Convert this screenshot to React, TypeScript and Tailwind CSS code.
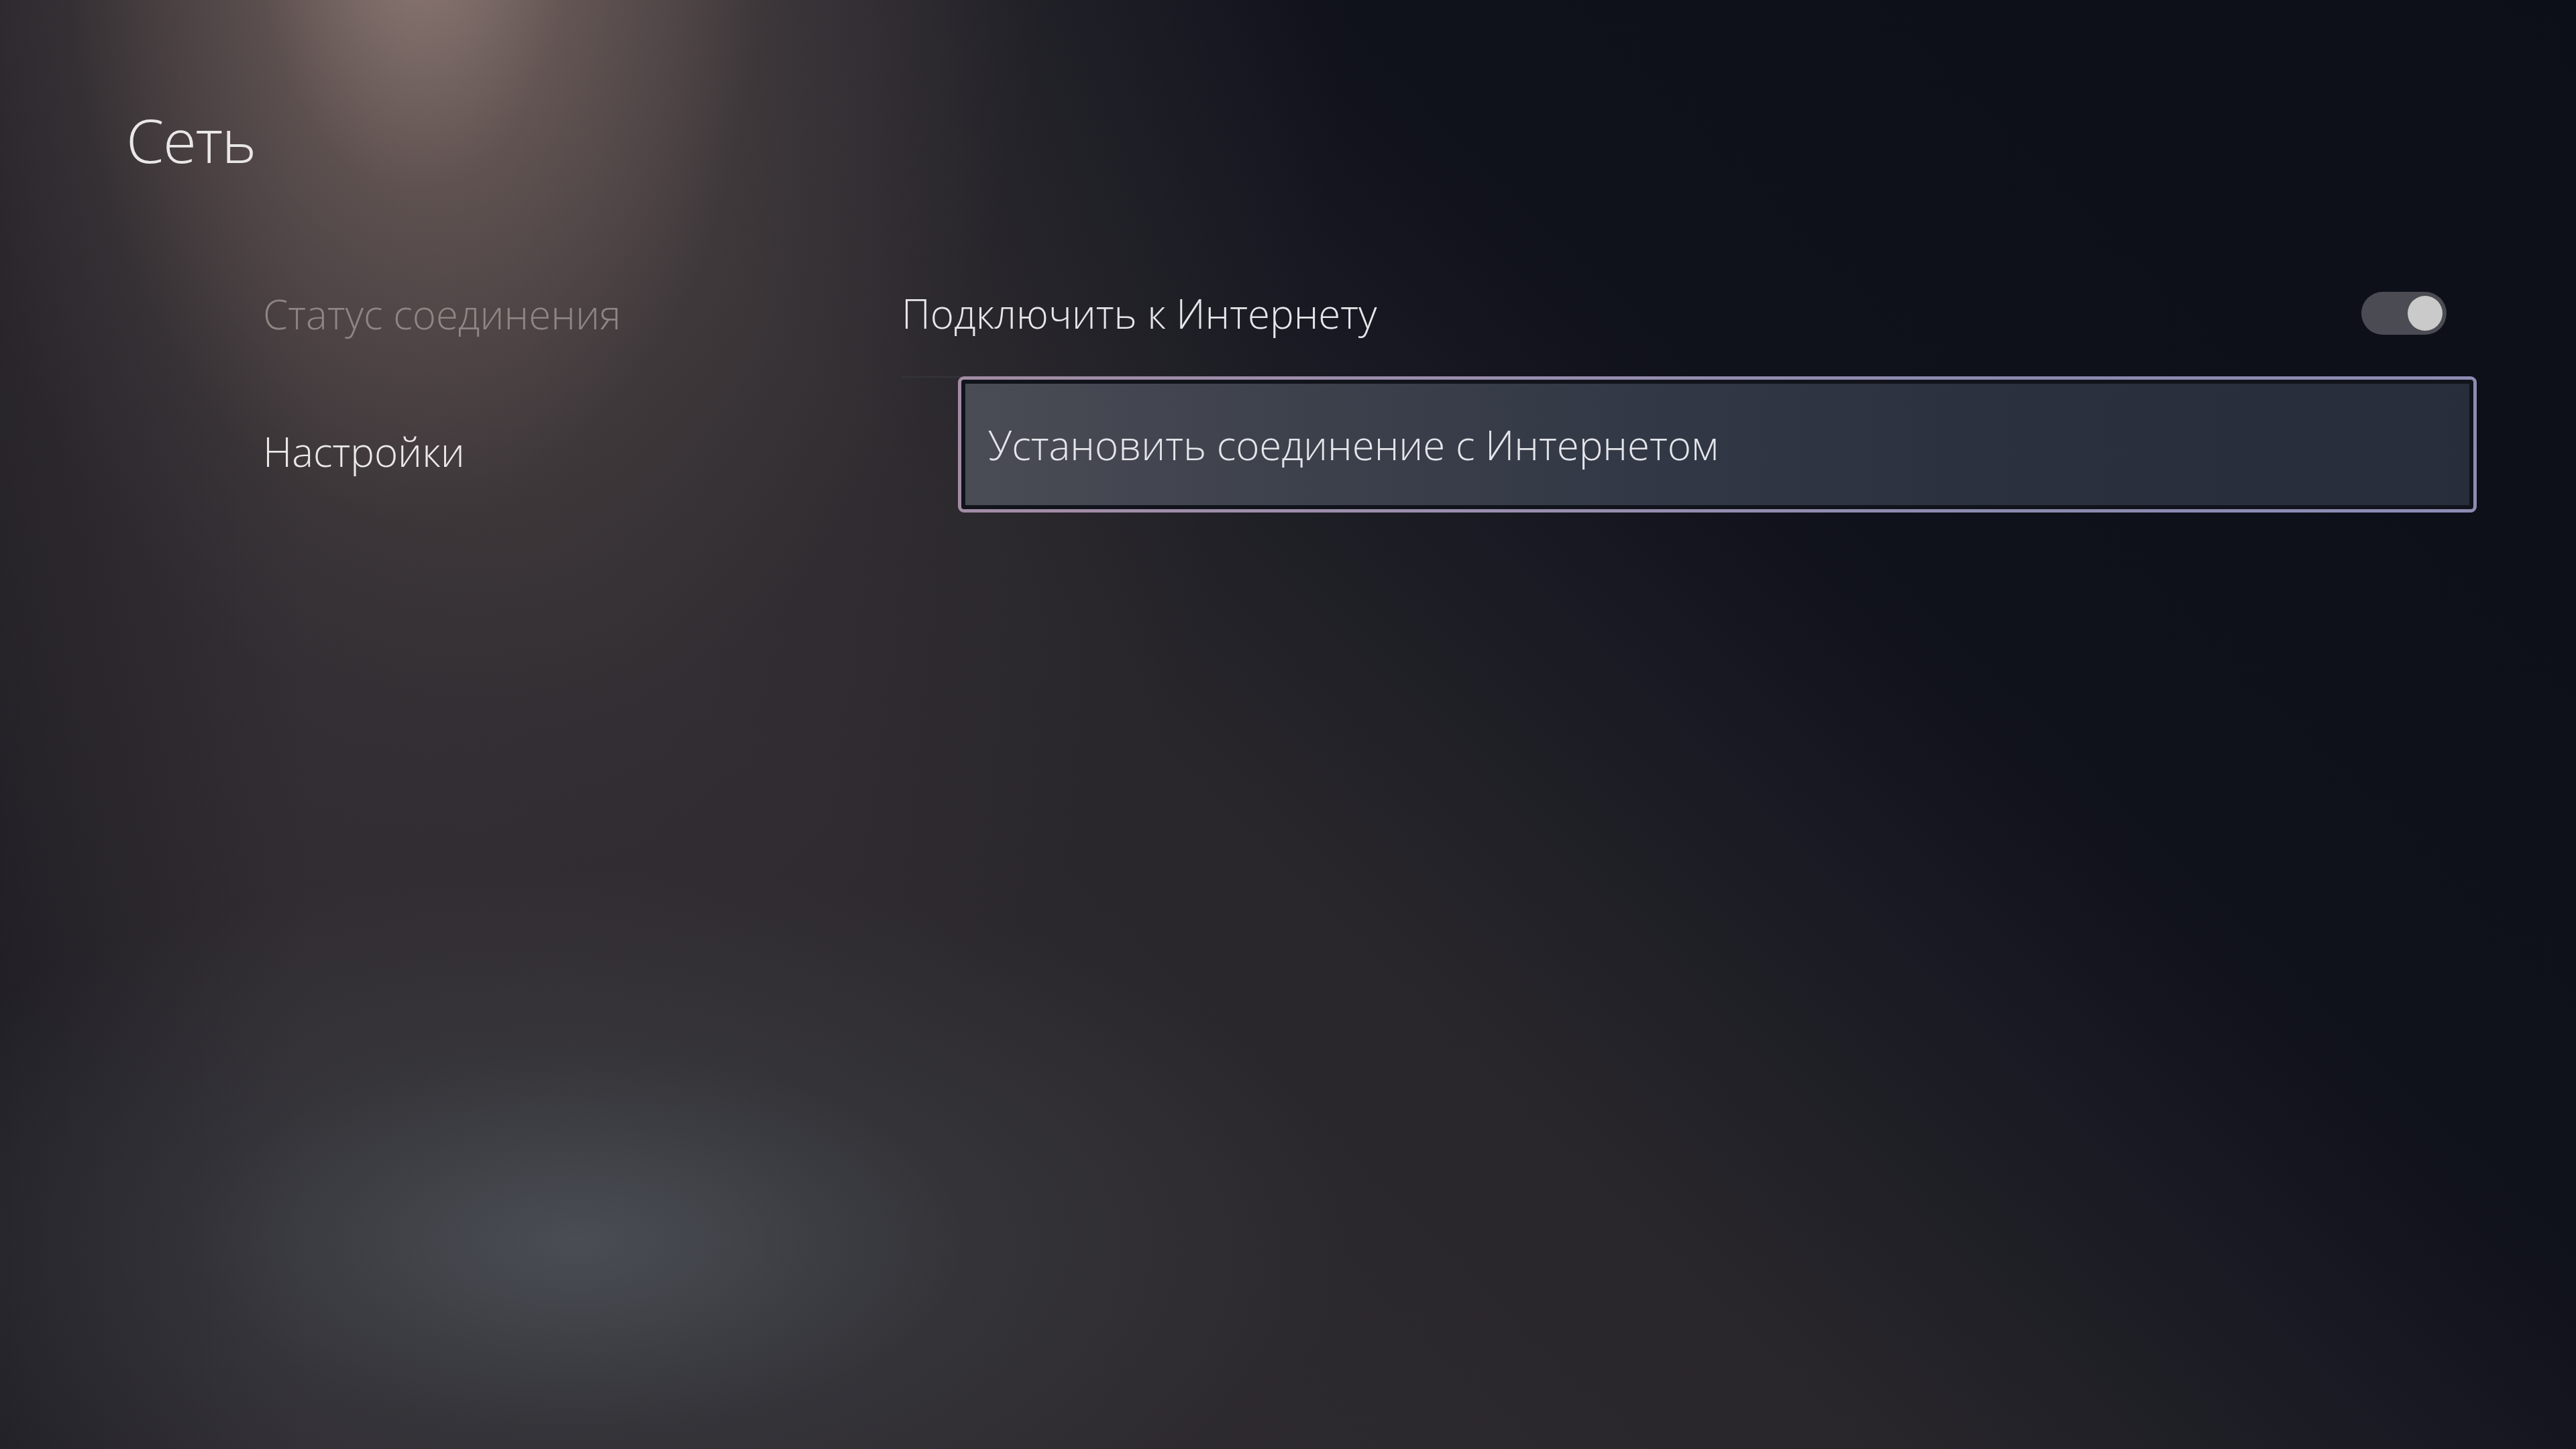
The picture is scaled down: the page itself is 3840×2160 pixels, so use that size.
import React from "react";

const menu = [
  { label: "Статус соединения", active: false, h: "h-[191px]" },
  { label: "Настройки", active: true, h: "h-[220px]" },
];

function Toggle() {
  return (
    <div className="flex h-[64px] w-[127px] items-center justify-end rounded-full bg-[#4a4b53] p-[6px]">
      <div className="h-[52px] w-[52px] rounded-full bg-[#cacaca]" />
    </div>
  );
}

export default function App() {
  return (
    <div
      className="relative h-[2160px] w-[3840px] overflow-hidden bg-[#0d0f19] bg-[radial-gradient(ellipse_520px_900px_at_620px_-120px,rgba(190,162,152,0.55)_0%,rgba(150,126,118,0.25)_45%,transparent_100%),radial-gradient(ellipse_1300px_2000px_at_720px_-200px,rgba(150,126,118,0.5)_0%,rgba(120,102,98,0.32)_35%,rgba(85,74,74,0.15)_65%,transparent_100%),radial-gradient(ellipse_1150px_560px_at_860px_1850px,rgba(92,102,108,0.6)_0%,rgba(72,78,84,0.28)_50%,transparent_100%),linear-gradient(90deg,rgba(18,18,26,0.45)_0%,transparent_12%),linear-gradient(45deg,#2f2b31_0%,#2c292e_36%,#28262b_47%,#1a1b23_59%,#0f111b_69%,#0c0e18_100%)] font-['Open_Sans',sans-serif] font-light text-[#e9e7e7]"
    >
      {/* header */}
      <h1 className="pl-[188px] pt-[163px] text-[91px] font-light leading-none tracking-[-1.5px]">
        Сеть
      </h1>

      <div className="mt-[118px] grid grid-cols-[952px_1fr] pl-[392px] pr-[193px]">
        {/* left menu */}
        <div className="flex flex-col">
          {menu.map((item) => (
            <div key={item.label} className={`flex items-center ${item.h}`}>
              <span
                className={`text-[60px] leading-none ${
                  item.active ? "text-[#ebe8e8]" : "text-[#8e8683]"
                }`}
              >
                {item.label}
              </span>
            </div>
          ))}
        </div>

        {/* settings list */}
        <div className="flex flex-col">
          <div className="flex h-[191px] items-center justify-between border-b-2 border-[#34343c]">
            <span className="text-[60px] leading-none text-[#e6e6ea]">Подключить к Интернету</span>
            <Toggle />
          </div>

          <div className="-mr-[45px] -mt-[2px] ml-[84px] rounded-[9px] bg-[linear-gradient(90deg,#a28ca4_0%,#9a8eae_35%,#8a8ab0_70%,#8c8cb4_100%)] p-[5px]">
            <div className="flex h-[193px] items-center rounded-[4px] border-[6px] border-[#12141c] bg-[linear-gradient(90deg,#4a4c55_0%,#3d414c_22%,#323845_45%,#2a303d_70%,#272d3a_100%)] pl-[34px]">
              <span className="text-[60px] leading-none text-[#e4e5ea]">
                Установить соединение с Интернетом
              </span>
            </div>
          </div>
        </div>
      </div>
    </div>
  );
}
